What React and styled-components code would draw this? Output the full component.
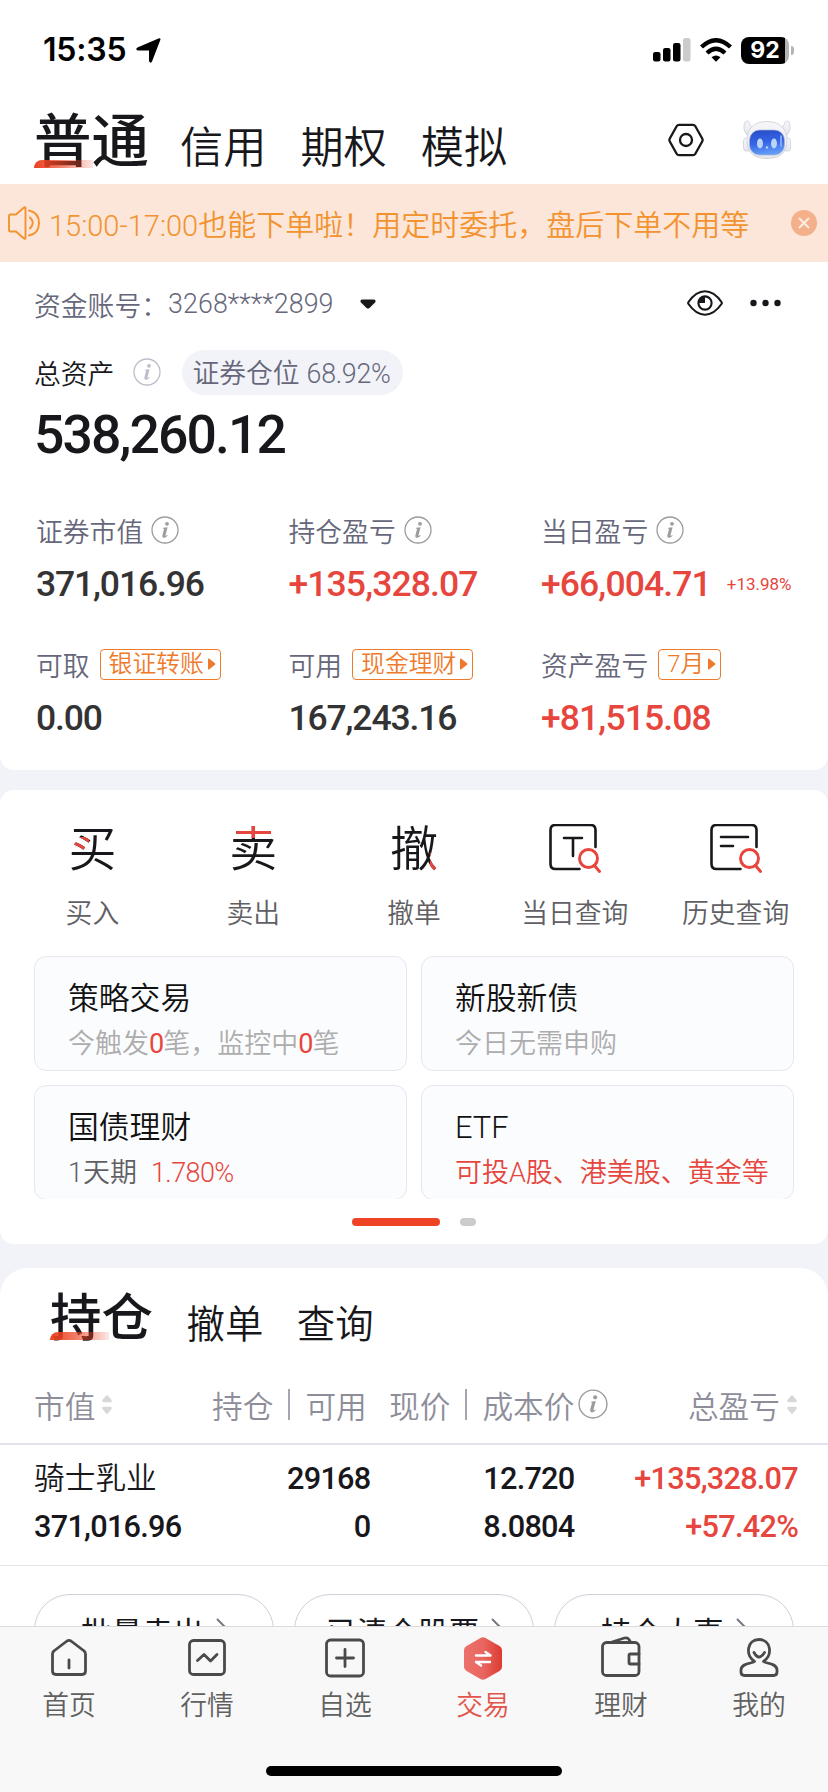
import React from "react";
import styled, { createGlobalStyle } from "styled-components";

const Global = createGlobalStyle`
  * { box-sizing: border-box; }
  body { margin: 0; background: #f2f3f8; }
  #root { width: 828px; }
`;

const RED = "#e6463d";
const INK = "#18181c";

const Screen = styled.div`
  width: 828px;
  height: 1792px;
  display: flex;
  flex-direction: column;
  overflow: hidden;
  background: #f2f3f8;
  color: ${INK};
  font-family: Roboto, "Noto Sans CJK SC", sans-serif;
  font-weight: 350;
  font-size: 27px;
  white-space: nowrap;
  svg { display: block; flex: none; }
`;
const Content = styled.main`
  flex: 1;
  min-height: 0;
  overflow: hidden;
  display: flex;
  flex-direction: column;
  & > * { flex: none; }
`;

const StatusBar = styled.div`
  height: 100px;
  background: #fff;
  display: flex;
  align-items: center;
  padding: 0 34px 0 43px;
`;
const Time = styled.span`
  font: 600 32px/40px Inter, sans-serif;
  color: #000;
  letter-spacing: -0.2px;
  width: 93px;
`;
const StatusIcons = styled.div`
  margin-left: auto;
  display: flex;
  align-items: center;
  gap: 9px;
`;
const Battery = styled.div`
  display: flex;
  align-items: center;
  gap: 2px;
`;
const BatteryBody = styled.div`
  width: 48px;
  height: 27px;
  border-radius: 8px;
  background: linear-gradient(90deg, #000 44px, #b4b4b4 44px);
  color: #fff;
  font: 700 23px/27px Inter, sans-serif;
  text-align: center;
`;
const BatteryNub = styled.div`
  width: 3px;
  height: 9px;
  border-radius: 0 4px 4px 0;
  background: #b4b4b4;
`;

const Header = styled.header`
  height: 84px;
  background: #fff;
  display: flex;
  padding: 0 37px 0 34px;
`;
const HeaderTab = styled.div`
  position: relative;
  height: 84px;
  font-size: ${(p) => (p.$active ? 57.5 : 43.2)}px;
  line-height: ${(p) => (p.$active ? 85 : 98)}px;
  font-weight: ${(p) => (p.$active ? 500 : 350)};
  margin-right: ${(p) => (p.$active ? 31 : 34)}px;
`;
const Underline = styled.i`
  position: absolute;
  left: 0;
  bottom: ${(p) => p.$bottom}px;
  width: 59px;
  height: 8px;
  border-radius: 8px 0 0 0;
  background: linear-gradient(90deg, rgba(236, 65, 32, 1), rgba(236, 65, 32, 0.68) 45%, rgba(236, 65, 32, 0.12));
`;
const HeaderIcons = styled.div`
  margin: 20px 0 0 auto;
  height: 40px;
  display: flex;
  align-items: center;
  gap: 39px;
`;

const Notice = styled.div`
  height: 78px;
  background: #fbe6d9;
  color: #f2932f;
  display: flex;
  align-items: center;
  padding: 0 11px 0 8px;
  font-size: 29px;
  span { margin-left: 9px; }
  svg:last-child { margin-left: auto; }
`;
const NoticeNum = styled.b`
  font-weight: 350;
  letter-spacing: 0;
`;

const Panel = styled.section`
  background: #fff;
`;
const AccountPanel = styled(Panel)`
  height: 508px;
  border-radius: 0 0 14px 14px;
  padding: 0 34px;
`;
const AccountRow = styled.div`
  height: 84px;
  display: flex;
  align-items: center;
  color: #66677a;
  font-size: 26.8px;
`;
const AccountNo = styled.span`
  width: 165px;
  margin-right: 27px;
  letter-spacing: 0.1px;
`;
const RowTools = styled.div`
  margin: -2px 13px 0 auto;
  display: flex;
  align-items: center;
  gap: 27px;
`;
const AssetRow = styled.div`
  height: 52px;
  display: flex;
  align-items: center;
  font-size: 26.8px;
`;
const Pill = styled.div`
  margin-left: 21px;
  height: 45px;
  width: 221px;
  line-height: 48px;
  border-radius: 23px;
  background: #f2f3f8;
  color: #66677a;
  padding-left: 10px;
  b { font-weight: 350; margin-left: 7px; letter-spacing: -0.3px; }
`;
const Total = styled.div`
  height: 72px;
  line-height: 73px;
  font-size: 53.5px;
  font-weight: 480;
  letter-spacing: -1.9px;
`;
const Metrics = styled.div`
  margin-top: 41px;
  padding-left: 2px;
  display: grid;
  grid-template-columns: 252.5px 252.5px 1fr;
`;
const Metric = styled.div`
  height: 134px;
`;
const MetricLabel = styled.div`
  height: 38px;
  display: flex;
  align-items: center;
  color: #66677a;
  font-size: 26.8px;
  svg { margin-left: 8px; }
`;
const MetricValue = styled.div`
  height: 56px;
  margin-top: 7px;
  display: flex;
  align-items: center;
  font-size: 35.5px;
  font-weight: 470;
  letter-spacing: ${(p) => (p.$up ? -0.9 : -1.15)}px;
  color: ${(p) => (p.$up ? RED : "#333")};
  small {
    font-size: 17px;
    font-weight: 400;
    letter-spacing: 0;
    margin-left: 16px;
  }
`;
const Tag = styled.span`
  margin-left: 10px;
  height: 31px;
  border: 1.5px solid #ee7a2c;
  border-radius: 4px;
  color: #ee7a2c;
  font-size: 23.8px;
  line-height: 32px;
  padding: 0 4px 0 8px;
  display: flex;
  align-items: center;
  svg { margin-left: 4px; }
`;

const TradePanel = styled(Panel)`
  margin-top: 20px;
  height: 454px;
  border-radius: 14px;
  padding: 34px 34px 0;
`;
const Actions = styled.div`
  margin: 0 -22px;
  height: 132px;
  display: grid;
  grid-template-columns: repeat(5, 1fr);
`;
const Action = styled.div`
  display: flex;
  flex-direction: column;
  align-items: center;
  font-size: 26.8px;
  color: #606064;
  line-height: 40px;
`;
const ActionIcon = styled.div`
  height: 50px;
  margin-bottom: 20px;
`;
const CharIcon = styled.div`
  width: 48px;
  height: 50px;
  line-height: 52px;
  font-size: 48px;
  font-weight: 350;
  color: transparent;
  background: linear-gradient(${RED}, ${RED}) ${(p) => p.$at} / ${(p) => p.$size} no-repeat, ${INK};
  background-clip: text;
  -webkit-background-clip: text;
`;
const Entries = styled.div`
  height: 243px;
  overflow: hidden;
  display: grid;
  grid-template-columns: 1fr 1fr;
  grid-auto-rows: 115px;
  gap: 14px;
`;
const Entry = styled.div`
  border: 1px solid #e6e6f0;
  border-radius: 12px;
  background: #fbfcfe;
  padding: 20px 0 0 33px;
  h3 {
    margin: 0;
    font-size: 30.8px;
    font-weight: 350;
    line-height: 44px;
    color: #111;
  }
  p {
    margin: 3px 0 0;
    font-size: 27px;
    line-height: 40px;
    color: ${(p) => p.$tone};
  }
  b { font-weight: 400; color: ${RED}; letter-spacing: -1px; }
  em { font-style: normal; color: ${RED}; margin-left: 14px; letter-spacing: -0.6px; }
`;
const Pager = styled.div`
  margin-top: 19px;
  display: flex;
  justify-content: center;
  gap: 20px;
  i { height: 8px; width: 88px; border-radius: 4px; background: #ee4425; }
  i + i { width: 16px; background: #ccc; }
`;

const HoldPanel = styled(Panel)`
  margin-top: 24px;
  height: 420px;
  border-radius: 28px 28px 0 0;
`;
const HoldTabs = styled.div`
  height: 97px;
  padding-left: 50px;
  display: flex;
`;
const HoldTab = styled.div`
  position: relative;
  font-size: ${(p) => (p.$active ? 51.5 : 38.4)}px;
  line-height: ${(p) => (p.$active ? 101 : 113)}px;
  font-weight: ${(p) => (p.$active ? 500 : 350)};
  margin-right: 33.5px;
  height: 97px;
`;
const HeadRow = styled.div`
  height: 80px;
  border-bottom: 2px solid #e3e3ec;
  padding: 0 31px 0 34px;
  display: grid;
  grid-template-columns: 178px 177px 221px 1fr;
  align-items: center;
  color: #8e8e9a;
  font-size: 30.7px;
`;
const HeadCell = styled.div`
  display: flex;
  align-items: center;
  justify-content: ${(p) => (p.$end ? "flex-end" : "flex-start")};
  svg { margin-left: 7px; }
`;
const Bar = styled.i`
  width: 2px;
  height: 31px;
  margin: 0 15px;
  background: #a5a5b0;
`;
const StockRow = styled.div`
  height: 121px;
  border-bottom: 1px solid #e3e3ec;
  padding: 10px 30px 0 34px;
  display: grid;
  grid-template-columns: 200px 136.5px 204px 1fr;
  grid-auto-rows: 48px;
  line-height: 47px;
  font-size: 30.7px;
`;
const Num = styled.div`
  font-weight: 470;
  letter-spacing: -0.75px;
  text-align: ${(p) => (p.$left ? "left" : "right")};
  color: ${(p) => (p.$up ? RED : INK)};
`;
const Links = styled.div`
  padding: 28px 34px 0;
  display: grid;
  grid-template-columns: repeat(3, 240px);
  gap: 20px;
`;
const LinkButton = styled.div`
  height: 72px;
  border: 1px solid #cfcfda;
  border-radius: 36px;
  display: flex;
  align-items: center;
  padding: 0 0 0 ${(p) => (p.$long ? 31 : 46)}px;
  font-size: 30.7px;
  font-weight: 400;
  svg { margin-left: 12px; }
`;

const TabBar = styled.nav`
  height: 166px;
  flex: none;
  background: #f8f8f8;
  border-top: 1px solid #dcdcde;
`;
const TabItems = styled.div`
  height: 139px;
  display: grid;
  grid-template-columns: repeat(6, 1fr);
`;
const TabItem = styled.div`
  display: flex;
  flex-direction: column;
  align-items: center;
  padding-top: 9px;
  color: ${(p) => (p.$active ? "#e3544b" : "#606060")};
  font-size: 26.8px;
  line-height: 40px;
  svg { margin-bottom: 6px; }
`;
const HomeIndicator = styled.div`
  width: 296px;
  height: 10px;
  border-radius: 5px;
  background: #000;
  margin: 0 auto;
`;

const InfoMark = styled.svg`
  && { margin-left: ${(p) => p.$gap}px; }
`;
const Info = ({ size = 28, color = "#9c9ca0", gap = 8 }) => (
  <InfoMark $gap={gap} width={size} height={size} viewBox="0 0 28 28" fill="none">
    <circle cx="14" cy="14" r="13" stroke={color} strokeWidth="1.300" />
    <circle cx="16" cy="7.800" r="1.900" fill={color} />
    <path d="M12.300 11.800l4.300-.6-2.100 8q-.3 1.500 1.700-.1l.5.500q-2.200 2.600-4.200 2.200-1.700-.4-1.100-2.600l1.600-6q.2-.8-1.100-.8z" fill={color} />
  </InfoMark>
);
const Sorter = () => (
  <svg width="10" height="19" viewBox="0 0 10 19" fill="#d8d8dc">
    <path d="M4.200.6Q5-.2 5.800.6L9.600 5q.8 2.200-1.200 2.200H1.600Q-.4 7.200.4 5zM4.200 18.400Q5 19.200 5.800 18.400L9.600 14q.8-2.200-1.200-2.200H1.600Q-.4 11.800.4 14z" />
  </svg>
);
const TagArrow = () => (
  <svg width="8" height="12" viewBox="0 0 8 12" fill="#ee7a2c"><path d="M1 .5L7 5.300q.8.700 0 1.400L1 11.500q-1 .3-1-.8V1.300Q0 .2 1 .5z" /></svg>
);
const Search = ({ children }) => (
  <svg width="52" height="50" viewBox="0 0 52 50" fill="none" stroke={INK} strokeWidth="2.600" strokeLinecap="round" strokeLinejoin="round">
    <path d="M46.500 23V6q0-5-5-5H6.500Q1.500 1 1.500 6v34q0 5 5 5h24" />
    {children}
    <g stroke={RED} strokeWidth="2.900">
      <circle cx="39.500" cy="34.500" r="9" />
      <path d="M45.500 41.500l5 6" />
    </g>
  </svg>
);
const Robot = () => (
  <svg width="48" height="40" viewBox="0 0 48 40">
    <defs>
      <linearGradient id="face" x1="0" y1="0" x2=".2" y2="1"><stop offset="0" stopColor="#274cc4" /><stop offset=".55" stopColor="#3563e6" /><stop offset="1" stopColor="#5f9bf5" /></linearGradient>
      <linearGradient id="shell" x1="0" y1="0" x2="0" y2="1"><stop offset="0" stopColor="#f7f7fa" /><stop offset="1" stopColor="#e6e7ed" /></linearGradient>
    </defs>
    <g fill="url(#shell)" stroke="#cdced6" strokeWidth=".8">
      <path d="M2 2q4-3 5 3l3 4-6 6Q-1 9 2 2zM46 2q-4-3-5 3l-3 4 6 6q5-6 2-13z" />
      <rect x=".5" y="18" width="7" height="13" rx="3" />
      <rect x="40.500" y="18" width="7" height="13" rx="3" />
      <path d="M24 1.500c14 0 20 8 20 19 0 13-8 18-20 18S4 33.500 4 20.500c0-11 6-19 20-19z" />
    </g>
    <rect x="6.500" y="10" width="35" height="25" rx="10" fill="url(#face)" stroke="#aab4d8" strokeWidth=".7" />
    <ellipse cx="17" cy="23.500" rx="3" ry="5" fill="#bcd4f6" />
    <ellipse cx="31" cy="23.500" rx="3" ry="5" fill="#bcd4f6" />
    <circle cx="24" cy="27.500" r="1.200" fill="#bcd4f6" />
    <path d="M38 16v10" stroke="#9dbcf5" strokeWidth="1.500" strokeLinecap="round" />
  </svg>
);
const Chevron = () => (
  <svg width="14" height="26" viewBox="0 0 14 26" fill="none" stroke="#777784" strokeWidth="2"><path d="M1 2l11 11L1 24" /></svg>
);

const TabIcon = ({ children }) => (
  <svg width="44" height="44" viewBox="0 0 44 44" fill="none" stroke="#4a4a4a" strokeWidth="2.800" strokeLinecap="round" strokeLinejoin="round">{children}</svg>
);

const metrics = [
  { label: "证券市值", value: "371,016.96", info: true },
  { label: "持仓盈亏", value: "+135,328.07", info: true, up: true },
  { label: "当日盈亏", value: "+66,004.71", info: true, up: true, extra: "+13.98%" },
  { label: "可取", value: "0.00", tag: "银证转账" },
  { label: "可用", value: "167,243.16", tag: "现金理财" },
  { label: "资产盈亏", value: "+81,515.08", tag: "7月", up: true },
];

const tabs = [
  ["首页", <TabIcon><path d="M7.500 14.500q-2 1.200-2 3.500v17q0 3.500 3.500 3.500h26q3.500 0 3.500-3.500V18q0-2.300-2-3.500L24 5q-2-1.300-4 0zM22 24v8" /></TabIcon>],
  ["行情", <TabIcon><rect x="4.500" y="4.500" width="35" height="34" rx="4" /><path d="M12.500 24.500l6.500-6 6.500 6.500 6.500-6.500" /></TabIcon>],
  ["自选", <TabIcon><rect x="3.500" y="4" width="37" height="36" rx="4" /><path d="M22 13.500v17M13.500 22h17" /></TabIcon>],
  ["交易", (
    <svg width="44" height="44" viewBox="0 0 44 44">
      <defs><linearGradient id="hex"><stop offset="0" stopColor="#ec716b" /><stop offset=".5" stopColor="#e86760" /><stop offset="1" stopColor="#dc3b31" /></linearGradient></defs>
      <path d="M19.500 2q2.500-1.400 5 0l14 8q2.500 1.400 2.500 4v17q0 2.600-2.500 4l-14 8q-2.500 1.400-5 0l-14-8Q3 33.600 3 31V14q0-2.600 2.500-4z" fill="url(#hex)" />
      <path d="M15 19.500h14.500l-5-3.500M29 26H15l5 3.500" fill="none" stroke="#fff" strokeWidth="2.400" strokeLinecap="round" strokeLinejoin="round" />
    </svg>
  )],
  ["理财", <TabIcon><rect x="3.500" y="6.500" width="36.500" height="33" rx="4" /><path d="M13 6l12.500-4q3-.8 4.500 1.500l1.500 2.500M40 18h-8.500q-1.500 0-1.500 1.500v7q0 1.500 1.500 1.500H40" /></TabIcon>],
  ["我的", <TabIcon><path d="M17.500 25.500C8 19 10 3.500 22 3.500s14 15.500 4.500 22c1.500 2 13.500 1.500 13.500 8.500v2q0 3.500-3.500 3.500h-29Q4 39.500 4 36v-2c0-7 12-6.500 13.500-8.500zM17 16.500q5 9 10.500 0" /></TabIcon>],
];

export default function App() {
  return (
    <Screen lang="zh-CN">
      <Global />
      <Content>
        <StatusBar>
          <Time>15:35</Time>
          <svg width="25" height="25" viewBox="0 0 25 25"><path d="M22.500.6q2.500-.9 1.800 1.500L16 23.500q-.8 1.800-2.200.8-.8-.6-.8-1.800v-10H2.500Q.3 12.500.3 11q0-1 1.700-1.700z" /></svg>
          <StatusIcons>
            <svg width="38" height="24" viewBox="0 0 38 24">
              <rect x="0" y="14" width="7.500" height="9.500" rx="2.200" /><rect x="10" y="10" width="7.500" height="13.500" rx="2.200" />
              <rect x="20" y="5" width="7.500" height="18.500" rx="2.200" /><rect x="30" y="0" width="7.500" height="23.500" rx="2.200" fill="#cbcbcb" />
            </svg>
            <svg width="32" height="24" viewBox="0 0 32 24">
              <g fill="none" stroke="#000" strokeWidth="4.300"><path d="M1.500 9q14.500-13.500 29 0" /><path d="M7 15q9-8.500 18 0" /></g>
              <path d="M11.500 19.300q4.500-3.800 9 0L16 23.800z" />
            </svg>
            <Battery><BatteryBody>92</BatteryBody><BatteryNub /></Battery>
          </StatusIcons>
        </StatusBar>

        <Header>
          <HeaderTab $active>普通<Underline $bottom={16} /></HeaderTab>
          <HeaderTab>信用</HeaderTab>
          <HeaderTab>期权</HeaderTab>
          <HeaderTab>模拟</HeaderTab>
          <HeaderIcons>
            <svg width="36" height="34" viewBox="0 0 36 34" fill="none" stroke={INK} strokeWidth="2.300" strokeLinejoin="round">
              <path d="M11 1.800h14q1.500 0 2.200 1.200l7 12.500q.8 1.500 0 3l-7 12.500q-.7 1.200-2.200 1.200H11q-1.500 0-2.200-1.200l-7-12.500q-.8-1.500 0-3L8.800 3q.7-1.200 2.200-1.200z" />
              <circle cx="18" cy="17" r="6" />
            </svg>
            <Robot />
          </HeaderIcons>
        </Header>

        <Notice>
          <svg width="32" height="34" viewBox="0 0 32 34" fill="none" stroke="#f2932f" strokeWidth="1.900" strokeLinejoin="round" strokeLinecap="round">
            <path d="M1 10q0-1.500 1.500-1.500H8L16 1.500q1.500-1 1.500.7v29.600q0 1.700-1.500.7L8 25.500H2.500Q1 25.500 1 24zM22 11.500q5.500 5.500 0 11M21 4.500q10 2 10 12.500t-10 12.500" />
          </svg>
          <span><NoticeNum>15:00-17:00</NoticeNum>也能下单啦！用定时委托，盘后下单不用等</span>
          <svg width="26" height="26" viewBox="0 0 26 26"><circle cx="13" cy="13" r="13" fill="#f4b08a" /><path d="M8 8l10 10M18 8L8 18" stroke="#fdeee4" strokeWidth="2" /></svg>
        </Notice>

        <AccountPanel>
          <AccountRow>
            资金账号：<AccountNo>3268****2899</AccountNo>
            <svg width="16" height="10" viewBox="0 0 16 10"><path d="M2 .5h12q2.500.5 1 3L9.500 9Q8 10 6.500 9L1 3.500Q-.5 1 2 .5z" fill={INK} /></svg>
            <RowTools>
              <svg width="36" height="26" viewBox="0 0 36 26" fill="none" stroke={INK} strokeWidth="2.100">
                <path d="M1.500 12Q9 1.300 18 1.300T34.500 12q.7 1 0 2Q27 24.700 18 24.700T1.500 14q-.7-1 0-2z" />
                <circle cx="18" cy="13" r="6.600" /><path d="M18 13V6.500Q12 7 11.500 13z" fill={INK} stroke="none" />
              </svg>
              <svg width="31" height="8" viewBox="0 0 31 8" fill={INK}><circle cx="3.500" cy="4" r="3.200" /><circle cx="15.500" cy="4" r="3.200" /><circle cx="27.500" cy="4" r="3.200" /></svg>
            </RowTools>
          </AccountRow>
          <AssetRow>
            总资产<Info color="#bdbdcb" gap={19} />
            <Pill>证券仓位<b>68.92%</b></Pill>
          </AssetRow>
          <Total>538,260.12</Total>
          <Metrics>
            {metrics.map((m) => (
              <Metric key={m.label}>
                <MetricLabel>
                  {m.label}
                  {m.info && <Info />}
                  {m.tag && <Tag>{m.tag}<TagArrow /></Tag>}
                </MetricLabel>
                <MetricValue $up={m.up}>{m.value}{m.extra && <small>{m.extra}</small>}</MetricValue>
              </Metric>
            ))}
          </Metrics>
        </AccountPanel>

        <TradePanel>
          <Actions>
            <Action><ActionIcon><CharIcon $at="3px 13px" $size="18px 13px">买</CharIcon></ActionIcon>买入</Action>
            <Action><ActionIcon><CharIcon $at="0 0" $size="48px 14px">卖</CharIcon></ActionIcon>卖出</Action>
            <Action><ActionIcon><CharIcon $at="40px 29px" $size="8px 21px">撤</CharIcon></ActionIcon>撤单</Action>
            <Action><ActionIcon><Search><path d="M15 14h18M24 14v18" /></Search></ActionIcon>当日查询</Action>
            <Action><ActionIcon><Search><path d="M11 13h27M11 22h12" /></Search></ActionIcon>历史查询</Action>
          </Actions>
          <Entries>
            <Entry $tone="#adadad"><h3>策略交易</h3><p>今触发<b>0</b>笔，监控中<b>0</b>笔</p></Entry>
            <Entry $tone="#adadad"><h3>新股新债</h3><p>今日无需申购</p></Entry>
            <Entry $tone="#606064"><h3>国债理财</h3><p>1天期<em>1.780%</em></p></Entry>
            <Entry $tone={RED}><h3>ETF</h3><p>可投A股、港美股、黄金等</p></Entry>
          </Entries>
          <Pager><i /><i /></Pager>
        </TradePanel>

        <HoldPanel>
          <HoldTabs>
            <HoldTab $active>持仓<Underline $bottom={25} /></HoldTab>
            <HoldTab>撤单</HoldTab>
            <HoldTab>查询</HoldTab>
          </HoldTabs>
          <HeadRow>
            <HeadCell>市值<Sorter /></HeadCell>
            <HeadCell>持仓<Bar />可用</HeadCell>
            <HeadCell>现价<Bar />成本价<Info size={30} gap={4} /></HeadCell>
            <HeadCell $end>总盈亏<Sorter /></HeadCell>
          </HeadRow>
          <StockRow>
            <span>骑士乳业</span><Num>29168</Num><Num>12.720</Num><Num $up>+135,328.07</Num>
            <Num $left>371,016.96</Num><Num>0</Num><Num>8.0804</Num><Num $up>+57.42%</Num>
          </StockRow>
          <Links>
            {["批量卖出", "已清仓股票", "持仓大事"].map((t) => (
              <LinkButton key={t} $long={t.length > 4}>{t}<Chevron /></LinkButton>
            ))}
          </Links>
        </HoldPanel>
      </Content>

      <TabBar>
        <TabItems>
          {tabs.map(([name, icon]) => (
            <TabItem key={name} $active={name === "交易"}>{icon}{name}</TabItem>
          ))}
        </TabItems>
        <HomeIndicator />
      </TabBar>
    </Screen>
  );
}
